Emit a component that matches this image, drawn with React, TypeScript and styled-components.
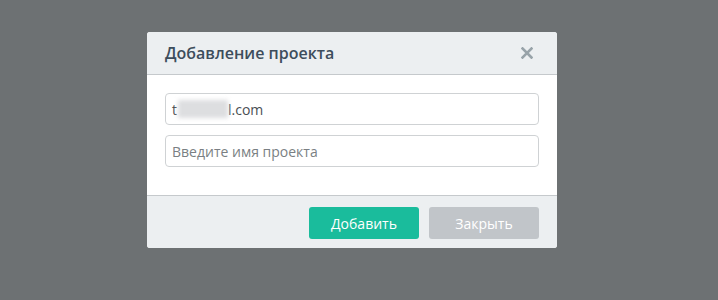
import { FC } from "react"
import styled, { createGlobalStyle } from "styled-components"

const GlobalStyle = createGlobalStyle`
  html, body {
    margin: 0;
    padding: 0;
    background: #6d7173;
    font-family: "Open Sans", "Liberation Sans", sans-serif;
  }
`

const Backdrop = styled.div`
  width: 718px;
  height: 300px;
  display: flex;
  justify-content: center;
  padding: 32px 14px 0 0;
  box-sizing: border-box;
`
const Modal = styled.div`
  width: 410px;
  height: 216px;
  background: #ffffff;
  border-radius: 3px;
  overflow: hidden;
  display: flex;
  flex-direction: column;
`
const Header = styled.div`
  height: 42px;
  display: flex;
  align-items: center;
  justify-content: space-between;
  padding: 0 24px 0 18px;
  background: #eceff1;
  border-bottom: 1px solid #c5c9cc;
  h2 {
    margin: 0;
    font-size: 16px;
    font-weight: 600;
    color: #3d4d5c;
  }
`
const Close = styled.button`
  border: 0;
  background: none;
  padding: 0;
  width: 12px;
  height: 12px;
  cursor: pointer;
  display: flex;
  svg {
    display: block;
  }
`
const Body = styled.div`
  flex: 1;
  display: flex;
  flex-direction: column;
  gap: 10px;
  padding: 18px 18px 0;
`
const fieldCss = `
  box-sizing: border-box;
  width: 100%;
  height: 32px;
  border: 1px solid #cfd2d4;
  border-radius: 4px;
  padding: 0 6px;
  font-family: "Open Sans", "Liberation Sans", sans-serif;
  font-size: 14px;
  color: #4a4f54;
  background: #fff;
`
const Field = styled.div`
  ${fieldCss}
  display: flex;
  align-items: center;
`
const Blur = styled.span`
  display: inline-block;
  width: 50px;
  height: 18px;
  margin-left: 1px;
  background: #dddee0;
  filter: blur(2px);
`
const Input = styled.input`
  ${fieldCss}
  outline: none;
  &::placeholder {
    color: #7a7f83;
  }
`
const Footer = styled.div`
  height: 53px;
  box-sizing: border-box;
  display: flex;
  justify-content: flex-end;
  gap: 10px;
  padding: 11px 18px 0;
  background: #eceff1;
  border-top: 1px solid #c5c9cc;
`
const Button = styled.button<{ $variant: "primary" | "muted" }>`
  width: 110px;
  height: 32px;
  border: 0;
  border-radius: 3px;
  font-family: "Open Sans", "Liberation Sans", sans-serif;
  font-size: 14px;
  color: #ffffff;
  cursor: pointer;
  background: ${({ $variant }) => ($variant === "primary" ? "#1abc9c" : "#c1c5c9")};
`

const App: FC = () => {
  return (
    <>
      <GlobalStyle />
      <Backdrop>
        <Modal>
          <Header>
            <h2>Добавление проекта</h2>
            <Close aria-label="Закрыть">
              <svg width="12" height="12" viewBox="0 0 12 12">
                <path d="M1.5 1.5 L10.5 10.5 M10.5 1.5 L1.5 10.5" stroke="#98a3a9" strokeWidth="2.6" strokeLinecap="square" />
              </svg>
            </Close>
          </Header>
          <Body>
            <Field>
              <span>t</span>
              <Blur />
              <span>l.com</span>
            </Field>
            <Input placeholder="Введите имя проекта" />
          </Body>
          <Footer>
            <Button $variant="primary">Добавить</Button>
            <Button $variant="muted">Закрыть</Button>
          </Footer>
        </Modal>
      </Backdrop>
    </>
  )
}

export default App
